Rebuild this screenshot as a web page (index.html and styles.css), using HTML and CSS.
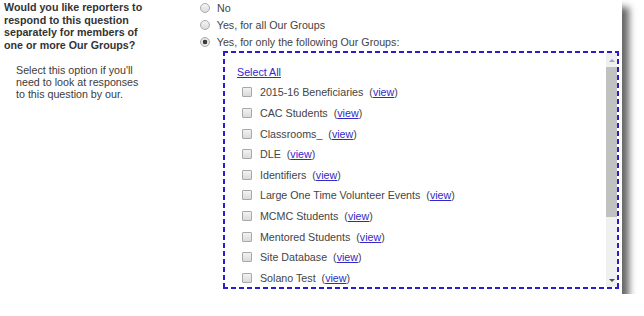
FILE: index.html
```html
<!DOCTYPE html>
<html lang="en">
<head>
    <meta charset="UTF-8">
    <title>Our Groups question</title>
    <link rel="stylesheet" href="styles.css">
</head>
<body>

<div class="shot">
    <div class="question">
        <p class="prompt">Would you like reporters to respond to this question separately for members of one or more Our Groups?</p>
        <p class="hint">Select this option if you'll need to look at responses to this question by our.</p>
    </div>

    <div class="answer">
        <label class="choice"><input type="radio" name="split"> No</label>
        <label class="choice"><input type="radio" name="split"> Yes, for all Our Groups</label>
        <label class="choice"><input type="radio" name="split" checked> Yes, for only the following Our Groups:</label>

        <div class="groups">
            <div class="group-list">
                <div class="row"><a href="#" class="select-all">Select All</a></div>
                <label class="row group"><input type="checkbox"> 2015-16 Beneficiaries <span class="view">(<a href="#">view</a>)</span></label>
                <label class="row group"><input type="checkbox"> CAC Students <span class="view">(<a href="#">view</a>)</span></label>
                <label class="row group"><input type="checkbox"> Classrooms_ <span class="view">(<a href="#">view</a>)</span></label>
                <label class="row group"><input type="checkbox"> DLE <span class="view">(<a href="#">view</a>)</span></label>
                <label class="row group"><input type="checkbox"> Identifiers <span class="view">(<a href="#">view</a>)</span></label>
                <label class="row group"><input type="checkbox"> Large One Time Volunteer Events <span class="view">(<a href="#">view</a>)</span></label>
                <label class="row group"><input type="checkbox"> MCMC Students <span class="view">(<a href="#">view</a>)</span></label>
                <label class="row group"><input type="checkbox"> Mentored Students <span class="view">(<a href="#">view</a>)</span></label>
                <label class="row group"><input type="checkbox"> Site Database <span class="view">(<a href="#">view</a>)</span></label>
                <label class="row group"><input type="checkbox"> Solano Test <span class="view">(<a href="#">view</a>)</span></label>
            </div>
            <div class="scrollbar">
                <span class="arrow-box"><span class="arrow up"></span></span>
                <span class="thumb"></span>
                <span class="track"></span>
                <span class="arrow-box"><span class="arrow down"></span></span>
            </div>
        </div>
    </div>
</div>

</body>
</html>
```

FILE: styles.css
```css
body {
    margin: 0;
    padding: 0;
    background: #fff;
    font-family: 'Liberation Sans', Arial, sans-serif;
    font-size: 10.7px;
    color: #444;
}

.shot {
    display: flex;
    width: 622px;
    height: 294px;
    background: #fff;
    overflow: hidden;
    box-shadow: 7px 7px 7px rgba(0, 0, 0, 0.6);
}

.question {
    width: 146px;
    padding-left: 4px;
}

.prompt {
    margin: 1px 0 0;
    font-weight: bold;
    line-height: 12.5px;
    color: #333;
}

.hint {
    margin: 12.5px 0 0 12px;
    line-height: 12.3px;
    color: #3c3c3c;
}

.answer {
    margin-left: 50px;
    margin-top: -1px;
}

.choice {
    display: flex;
    align-items: center;
    height: 17px;
    white-space: pre;
}

input[type="radio"] {
    appearance: none;
    width: 10px;
    height: 10px;
    margin: 0 4px 0 0;
    border: 1px solid #aaa;
    border-radius: 50%;
    background: linear-gradient(#f4f4f4, #dcdcdc);
    box-sizing: border-box;
}

input[type="radio"]:checked {
    background: radial-gradient(circle, #3a3a3a 0, #3a3a3a 2px, #e6e6e6 2.6px);
}

.groups {
    display: flex;
    width: 396px;
    height: 238px;
    margin: 1px 0 0 23px;
    padding: 2px;
    box-sizing: border-box;
    background:
        linear-gradient(90deg, #2a1ccc 5px, transparent 0) 0 0 / 8px 2px repeat-x,
        linear-gradient(90deg, #2a1ccc 5px, transparent 0) 0 100% / 8px 2px repeat-x,
        linear-gradient(#2a1ccc 5px, transparent 0) 0 0 / 2px 8px repeat-y,
        linear-gradient(#2a1ccc 5px, transparent 0) 100% 0 / 2px 8px repeat-y,
        #fff;
}

.group-list {
    flex: 1;
    padding: 8.5px 0 0 12px;
    overflow: hidden;
}

.row {
    display: flex;
    align-items: center;
    height: 20.6px;
    white-space: pre;
}

.group {
    padding-left: 5px;
}

input[type="checkbox"] {
    appearance: none;
    width: 10px;
    height: 10px;
    margin: 0 5px 0 0;
    border: 1px solid #a8a8a8;
    border-radius: 1px;
    background: linear-gradient(#f2f2f2, #dadada);
    box-sizing: border-box;
}

.view {
    margin-left: 3px;
}

a {
    color: #3328c9;
    text-decoration: underline;
}

.scrollbar {
    display: flex;
    flex-direction: column;
    width: 11px;
    background: #f0f0f0;
}

.arrow-box {
    display: flex;
    align-items: center;
    justify-content: center;
    height: 14px;
}

.arrow {
    width: 0;
    height: 0;
    border-left: 3px solid transparent;
    border-right: 3px solid transparent;
}

.arrow.up {
    border-bottom: 3px solid #a3a3a3;
}

.arrow.down {
    border-top: 3px solid #505050;
}

.thumb {
    height: 150px;
    background: #c1c1c1;
}

.track {
    flex: 1;
}
```
